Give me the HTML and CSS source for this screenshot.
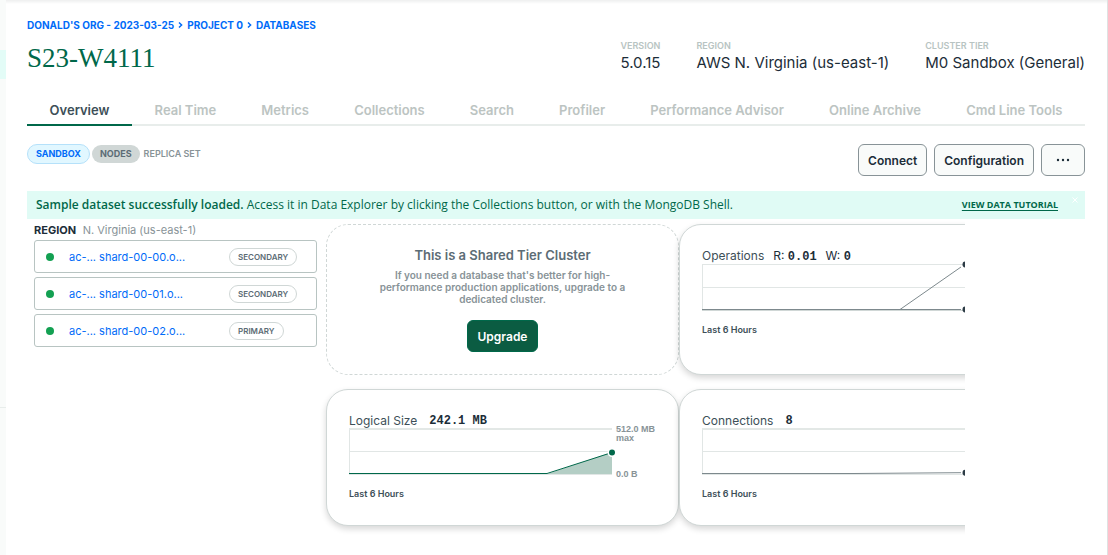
FILE: index.html
```html
<!DOCTYPE html>
<html lang="en">
<head>
<meta charset="utf-8">
<title>S23-W4111</title>
<link rel="stylesheet" href="styles.css">
</head>
<body>
<div class="shell">
  <aside class="rail"><div class="rail-active"></div><div class="rail-rule"></div></aside>
  <main class="main">
    <nav class="crumbs" aria-label="Breadcrumb">
      <a href="#">DONALD'S ORG - 2023-03-25</a>
      <svg class="chevron" viewBox="0 0 5 8"><path d="M1 1.5 3.6 4 1 6.5"/></svg>
      <a href="#">PROJECT 0</a>
      <svg class="chevron" viewBox="0 0 5 8"><path d="M1 1.5 3.6 4 1 6.5"/></svg>
      <a href="#">DATABASES</a>
    </nav>
    <header class="header">
      <h1 class="title">S23-W4111</h1>
      <dl class="facts">
        <div><dt>VERSION</dt><dd>5.0.15</dd></div>
        <div><dt>REGION</dt><dd>AWS N. Virginia (us-east-1)</dd></div>
        <div><dt>CLUSTER TIER</dt><dd>M0 Sandbox (General)</dd></div>
      </dl>
    </header>
    <nav class="tabs" aria-label="Cluster">
      <a class="tab tab-active" href="#">Overview</a>
      <a class="tab" href="#">Real Time</a>
      <a class="tab" href="#">Metrics</a>
      <a class="tab" href="#">Collections</a>
      <a class="tab" href="#">Search</a>
      <a class="tab" href="#">Profiler</a>
      <a class="tab" href="#">Performance Advisor</a>
      <a class="tab" href="#">Online Archive</a>
      <a class="tab" href="#">Cmd Line Tools</a>
    </nav>
    <div class="toolbar">
      <div class="tags">
        <span class="tag tag-blue">SANDBOX</span>
        <span class="tag tag-gray">NODES</span>
        <span class="tag-text">REPLICA SET</span>
      </div>
      <div class="actions">
        <button class="button" type="button">Connect</button>
        <button class="button" type="button">Configuration</button>
        <button class="button" type="button" aria-label="More">
          <svg class="dots" viewBox="0 0 14 4"><circle cx="2" cy="2" r="1.2"/><circle cx="7" cy="2" r="1.2"/><circle cx="12" cy="2" r="1.2"/></svg>
        </button>
      </div>
    </div>
    <div class="banner">
      <p class="banner-text"><strong>Sample dataset successfully loaded.</strong> Access it in Data Explorer by clicking the Collections button, or with the MongoDB Shell.</p>
      <a class="banner-link" href="#">VIEW DATA TUTORIAL</a>
      <button class="banner-close" type="button" aria-label="Close"><svg viewBox="0 0 6 6"><path d="M.5.5 5.5 5.5M5.5.5.5 5.5"/></svg></button>
    </div>
    <div class="overview">
      <section class="region">
        <h2 class="region-title">REGION <span>N. Virginia (us-east-1)</span></h2>
        <ul class="nodes">
          <li class="node"><i class="status"></i><a class="node-name" href="#">ac-... shard-00-00.o...</a><span class="role">SECONDARY</span></li>
          <li class="node"><i class="status"></i><a class="node-name" href="#">ac-... shard-00-01.o...</a><span class="role">SECONDARY</span></li>
          <li class="node"><i class="status"></i><a class="node-name" href="#">ac-... shard-00-02.o...</a><span class="role">PRIMARY</span></li>
        </ul>
      </section>
      <div class="cards">
        <section class="card card-upgrade">
          <h2 class="upgrade-title">This is a Shared Tier Cluster</h2>
          <p class="upgrade-text">If you need a database that's better for high-performance production applications, upgrade to a dedicated cluster.</p>
          <button class="button button-primary" type="button">Upgrade</button>
        </section>
        <section class="card">
          <h2 class="metric"><span>Operations</span><span class="rw">R: <b>0.01</b></span><span class="rw">W: <b>0</b></span></h2>
          <div class="plot">
            <svg class="chart" viewBox="0 0 263 48">
              <path class="grid" d="M0 1.5H263M0 24.5H263M.5 1V47"/>
              <path class="base" d="M0 47.5H263"/>
              <path class="line" d="M0 46.5H198L259 4"/>
              <path class="line" d="M0 46.5H259"/>
              <circle class="point" cx="263.5" cy="1.5" r="3"/><circle class="point" cx="263.5" cy="46.5" r="3"/>
            </svg>
          </div>
          <p class="range">Last 6 Hours</p>
        </section>
        <section class="card">
          <h2 class="metric"><span>Logical Size</span><b class="value">242.1 MB</b></h2>
          <div class="plot">
            <svg class="chart" viewBox="0 0 263 48">
              <path class="grid" d="M0 24.5H263M.5 1V47M0 47.5H263"/>
              <path class="cap" d="M0 2H263"/>
              <path class="area" d="M198 47 263 25V47Z"/>
              <path class="line-green" d="M0 46.5H198L263 25.5"/>
              <circle class="halo" cx="263" cy="25.5" r="4.5"/><circle class="point-green" cx="263" cy="25.5" r="3"/>
            </svg>
            <div class="scale"><span>512.0 MB<br>max</span><span>0.0 B</span></div>
          </div>
          <p class="range">Last 6 Hours</p>
        </section>
        <section class="card">
          <h2 class="metric"><span>Connections</span><b class="value">8</b></h2>
          <div class="plot">
            <svg class="chart" viewBox="0 0 263 48">
              <path class="grid" d="M0 24.5H263M.5 1V47M0 47.5H263"/>
              <path class="cap" d="M0 2H263"/>
              <path class="line" d="M0 46.5H152L259 45.7"/>
              <circle class="point" cx="263.5" cy="45.7" r="3"/>
            </svg>
          </div>
          <p class="range">Last 6 Hours</p>
        </section>
      </div>
    </div>
  </main>
</div>
</body>
</html>
```
FILE: styles.css
```css
* { box-sizing: border-box; }
body {
  margin: 0;
  font-family: Inter, "Liberation Sans", sans-serif;
  font-size: 12px;
  line-height: 16px;
  color: #1c2d38;
  background: #fff;
}
h1, h2, p, dl, dd, ul { margin: 0; padding: 0; }
a { text-decoration: none; }
button { font-family: inherit; cursor: pointer; }

.shell {
  display: flex;
  min-height: 100vh;
  border-right: 1px solid #dfe2e2;
  background: linear-gradient(#eeefef, #fff 4px);
}
.rail { flex: 0 0 6px; padding-top: 50px; background: #f9fbfa; }
.rail-active { height: 29px; background: #e3fcf7; }
.rail-rule { margin-top: 328px; height: 1px; background: #e8edeb; }
.main { flex: 1; min-width: 0; padding: 17px 22px 24px 21px; }

.crumbs { display: flex; align-items: center; gap: 4px; font-size: 10px; font-weight: 700; }
.crumbs a { color: #016bf8; }
.chevron { width: 5px; height: 8px; fill: none; stroke: #016bf8; stroke-width: 1.5; }

.header { display: flex; justify-content: space-between; padding-top: 7px; }
.title { font: 400 27px/36px "Liberation Serif", serif; color: #00684a; }
.facts { display: flex; gap: 36px; }
.facts dt { font-size: 9px; line-height: 12px; font-weight: 600; color: #b8c4c2; }
.facts dd { font-size: 15px; line-height: 22px; }

.tabs { display: flex; margin-top: 20px; border-bottom: 2px solid #e8edeb; }
.tab {
  flex: 1 1 auto;
  margin-bottom: -2px;
  padding: 6px 0;
  border-bottom: 2px solid transparent;
  text-align: center;
  white-space: nowrap;
  font-size: 13px;
  font-weight: 600;
  color: #bcc4c2;
}
.tab-active { color: #3d4f58; border-color: #00684a; }

.toolbar { display: flex; justify-content: space-between; align-items: flex-start; margin-top: 18px; }
.tags { display: flex; align-items: center; gap: 2px; font-size: 9px; font-weight: 600; }
.tag { padding: 0 8px; border: 1px solid; border-radius: 10px; line-height: 18px; font-weight: 700; }
.tag-blue { color: #016bf8; background: #e1f7ff; border-color: #b5e1fa; }
.tag-gray { color: #5c6c75; background: #d0d7d6; border: 0; }
.tag-text { margin-left: 2px; color: #889397; }
.actions { display: flex; gap: 7px; }
.button {
  height: 32px;
  padding: 0 9px;
  border: 1px solid #889397;
  border-radius: 6px;
  background: #f9fbfa;
  font-size: 12px;
  font-weight: 600;
  color: #1c2d38;
}
.dots { display: block; width: 14px; height: 4px; margin: 0 5px; fill: #1c2d38; }

.banner {
  display: flex;
  align-items: center;
  margin-top: 15px;
  padding: 6px 7px 6px 9px;
  background: #e0fbf5;
  font-family: "Open Sans", sans-serif;
  font-size: 12px;
  color: #00684a;
}
.banner-text { flex: 1; }
.banner-text strong { font-weight: 600; }
.banner-link { font-size: 9px; font-weight: 700; color: #00684a; text-decoration: underline; text-underline-offset: 2px; }
.banner-close { align-self: flex-start; margin-left: 14px; padding: 0; border: 0; background: none; }
.banner-close svg { display: block; width: 6px; height: 6px; stroke: #fff; fill: none; }

.overview {
  display: flex;
  gap: 9px;
  margin-right: 120px;
  padding: 5px 0 24px 7px;
  overflow-x: clip;
}
.region { flex: 0 0 283px; }
.region-title { font-size: 11px; line-height: 12px; font-weight: 700; }
.region-title span { margin-left: 4px; font-weight: 400; color: #889397; }
.nodes { display: grid; gap: 4px; margin-top: 4px; list-style: none; }
.node {
  display: grid;
  grid-template-columns: 23px 160px auto;
  align-items: center;
  justify-content: start;
  height: 33px;
  padding-left: 11px;
  border: 1px solid #b8c4c2;
  border-radius: 3px;
}
.status { width: 8px; height: 8px; border-radius: 50%; background: #13a052; }
.node-name { font-size: 11px; color: #016bf8; }
.role {
  padding: 0 8px;
  border: 1px solid #d0d7d6;
  border-radius: 9px;
  font-size: 8px;
  line-height: 16px;
  font-weight: 600;
  color: #5c6c75;
}

.cards { display: grid; grid-template-columns: 353px 353px; gap: 14px 0; }
.card {
  padding: 25px 22px 24px;
  border: 1px solid #d0d7d6;
  border-radius: 22px;
  background: #fff;
  box-shadow: 0 3px 6px rgba(0, 0, 0, .16);
}
.card-upgrade { padding: 22px 50px; border-style: dashed; box-shadow: none; text-align: center; }
.upgrade-title { font-size: 13px; line-height: 16px; font-weight: 600; color: #5c6c75; }
.upgrade-text { margin: 6px 0 15px; font-size: 10px; line-height: 12px; font-weight: 600; color: #889397; }
.button-primary { padding: 0 10px; border-color: #00684a; background: #0b5c42; color: #fff; }
.metric { display: flex; font-size: 12px; line-height: 12px; font-weight: 400; color: #3d4f58; }
.metric b { font-family: "Liberation Mono", monospace; font-weight: 700; color: #1c2d38; }
.value { margin-left: 12px; }
.rw { margin-left: 9px; color: #1c2d38; }
.plot { display: flex; }
.chart { flex: none; width: 263px; height: 48px; overflow: visible; fill: none; }
.grid { stroke: #e1e6e5; }
.base { stroke: #d0d7d6; }
.cap { stroke: #e3e8e6; stroke-width: 2; }
.line { stroke: #7d898d; }
.line-green { stroke: #00684a; }
.area { fill: #b4cec5; }
.halo { fill: #fff; }
.point { fill: #2c3b45; }
.point-green { fill: #00684a; }
.scale {
  display: flex;
  flex-direction: column;
  justify-content: space-between;
  margin: -2px 0 -4px 4px;
  font: 700 9px/9px "Liberation Sans", sans-serif;
  color: #889397;
  white-space: nowrap;
}
.range { margin: 13px 0 1px; font-size: 9px; line-height: 12px; font-weight: 600; color: #3d4f58; }
```
